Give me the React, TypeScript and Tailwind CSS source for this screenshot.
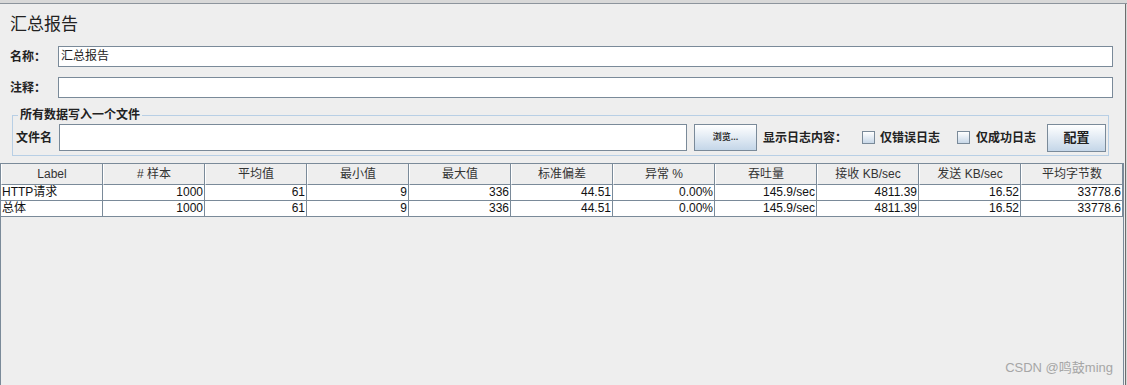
import React from 'react';

const headers = ['Label', '# 样本', '平均值', '最小值', '最大值', '标准偏差', '异常 %', '吞吐量', '接收 KB/sec', '发送 KB/sec', '平均字节数'];

const rows = [
  ['HTTP请求', '1000', '61', '9', '336', '44.51', '0.00%', '145.9/sec', '4811.39', '16.52', '33778.6'],
  ['总体', '1000', '61', '9', '336', '44.51', '0.00%', '145.9/sec', '4811.39', '16.52', '33778.6'],
];

const font = { fontFamily: '"Liberation Sans", "Noto Sans CJK SC", sans-serif' };

const Checkbox: React.FC = () => (
  <span className="inline-block shrink-0 w-[13px] h-[13px] border border-[#7a8a99] bg-gradient-to-b from-white to-[#c8d8e8]" />
);

const App: React.FC = () => {
  return (
    <div className="w-[1127px] h-[385px] bg-[#eeeeee] flex flex-col overflow-hidden relative text-[#222]" style={font}>
      {/* window top edge */}
      <div className="h-[3px] bg-[#d8d8d8] shrink-0" />
      <div className="h-px bg-[#8c949c] shrink-0" />

      <div className="flex flex-1 min-h-0">
        <div className="flex-1 flex flex-col min-w-0">
          {/* Title */}
          <div className="pl-[10px] pt-[10px] h-[40px] text-[17px] leading-[22px]">汇总报告</div>

          {/* 名称 */}
          <div className="flex items-center h-[21px] mt-[2px] pr-[11px]">
            <span className="w-[58px] pl-[10px] text-[12px] font-bold">名称：</span>
            <div className="flex-1 h-[21px] bg-white border border-[#7a8a99] text-[12px] leading-[19px] pl-[2px]">汇总报告</div>
          </div>

          {/* 注释 */}
          <div className="flex items-center h-[21px] mt-[10px] pr-[11px]">
            <span className="w-[58px] pl-[10px] text-[12px] font-bold">注释：</span>
            <div className="flex-1 h-[21px] bg-white border border-[#7a8a99]" />
          </div>

          {/* 文件 fieldset */}
          <fieldset className="ml-[12px] mr-[17px] mt-[10px] border border-[#b8cfe5] pl-[3px] pr-[2px] pb-[2px] pt-px h-[48px]">
            <legend className="ml-[2px] px-[2px] text-[12px] font-bold leading-[14px]">所有数据写入一个文件</legend>
            <div className="flex items-center h-[29px] whitespace-nowrap">
              <span className="w-[43px] shrink-0 text-[12px] font-bold">文件名</span>
              <div className="w-[628px] shrink-0 h-[27px] bg-white border border-[#7a8a99]" />
              <button className="ml-[7px] shrink-0 w-[63px] h-[27px] border border-[#7a8a99] bg-gradient-to-b from-white to-[#c4d6e8] text-[9px] font-bold text-[#333]">
                浏览...
              </button>
              <span className="ml-[6px] w-[99px] shrink-0 text-[12px] font-bold">显示日志内容：</span>
              <Checkbox />
              <span className="ml-[5px] w-[77px] shrink-0 text-[12px] font-bold">仅错误日志</span>
              <Checkbox />
              <span className="ml-[6px] w-[60px] shrink-0 text-[12px] font-bold">仅成功日志</span>
              <button className="ml-[11px] shrink-0 w-[59px] h-[28px] border border-[#7a8a99] bg-gradient-to-b from-white to-[#c4d6e8] text-[13px] font-bold text-[#222]">
                配置
              </button>
            </div>
          </fieldset>

          {/* Table */}
          <div className="mt-[7px] flex-1 border-l border-t border-r border-[#7a8a99] w-[1124px]">
            <div className="grid grid-cols-[repeat(11,102px)]">
              {headers.map((h) => (
                <div
                  key={h}
                  className="h-[21px] border-r border-b border-[#7a8a99] border-l border-l-white text-[12px] text-[#333] flex items-center justify-center"
                >
                  {h}
                </div>
              ))}
              {rows.map((r, ri) =>
                r.map((c, ci) => (
                  <div
                    key={`${ri}-${ci}`}
                    className={`h-[16px] bg-white border-r border-b border-[#7a8a99] text-[12px] leading-[15px] text-[#111] px-px ${ci === 0 ? 'text-left' : 'text-right'}`}
                  >
                    {c}
                  </div>
                ))
              )}
            </div>
          </div>
        </div>
        <div className="w-px bg-[#eeeeee]" />
        <div className="w-px bg-[#6d6d6d]" />
        <div className="w-px bg-[#d8d8d8]" />
      </div>

      <div className="absolute right-[14px] bottom-[8px] text-[13px] text-[#a6a6a6]">CSDN @鸣鼓ming</div>
    </div>
  );
};

export default App;
